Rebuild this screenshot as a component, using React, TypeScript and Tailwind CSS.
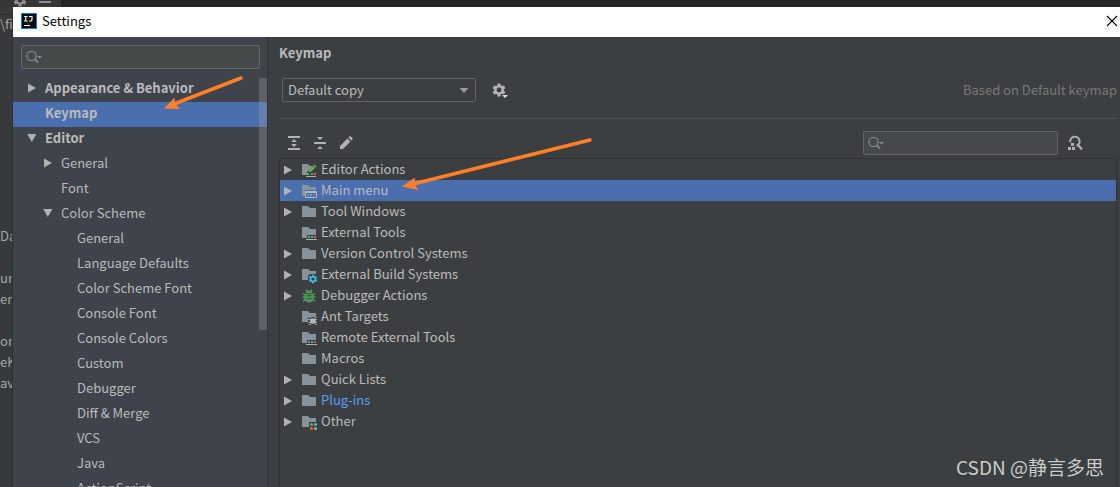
import React from "react";

type IconKind =
  | "folder"
  | "editor"
  | "menu"
  | "tools"
  | "build"
  | "bug"
  | "ant"
  | "other";

type SideItem = {
  label: string;
  level: 0 | 1 | 2;
  open?: boolean;
  bold?: boolean;
  selected?: boolean;
};

type ActionItem = {
  label: string;
  icon: IconKind;
  expandable?: boolean;
  selected?: boolean;
  modified?: boolean;
};

const sideItems: SideItem[] = [
  { label: "Appearance & Behavior", level: 0, open: false, bold: true },
  { label: "Keymap", level: 0, bold: true, selected: true },
  { label: "Editor", level: 0, open: true, bold: true },
  { label: "General", level: 1, open: false },
  { label: "Font", level: 1 },
  { label: "Color Scheme", level: 1, open: true },
  { label: "General", level: 2 },
  { label: "Language Defaults", level: 2 },
  { label: "Color Scheme Font", level: 2 },
  { label: "Console Font", level: 2 },
  { label: "Console Colors", level: 2 },
  { label: "Custom", level: 2 },
  { label: "Debugger", level: 2 },
  { label: "Diff & Merge", level: 2 },
  { label: "VCS", level: 2 },
  { label: "Java", level: 2 },
  { label: "ActionScript", level: 2 },
];

const actionItems: ActionItem[] = [
  { label: "Editor Actions", icon: "editor", expandable: true },
  { label: "Main menu", icon: "menu", expandable: true, selected: true },
  { label: "Tool Windows", icon: "folder", expandable: true },
  { label: "External Tools", icon: "tools" },
  { label: "Version Control Systems", icon: "folder", expandable: true },
  { label: "External Build Systems", icon: "build", expandable: true },
  { label: "Debugger Actions", icon: "bug", expandable: true },
  { label: "Ant Targets", icon: "ant" },
  { label: "Remote External Tools", icon: "tools" },
  { label: "Macros", icon: "folder" },
  { label: "Quick Lists", icon: "folder", expandable: true },
  { label: "Plug-ins", icon: "folder", expandable: true, modified: true },
  { label: "Other", icon: "other", expandable: true },
];

const projectLines = ["Da", "", "urc", "ere", "", "onf", "eK", "ava"];

const indent = { 0: "pl-[13px]", 1: "pl-[29px]", 2: "pl-[45px]" };

function Chevron({ open }: { open?: boolean }) {
  return (
    <svg className="size-3 shrink-0" viewBox="0 0 12 12" fill="#afb1b3" aria-hidden="true">
      {open === false && <path d="M2 1.5 10 6 2 10.5z" />}
      {open === true && <path d="M1.2 2h9.2L5.8 10z" />}
    </svg>
  );
}

function SearchIcon() {
  return (
    <svg className="pointer-events-none absolute top-1 left-[5px] h-4 w-[18px]" viewBox="0 0 18 16" aria-hidden="true">
      <circle cx="5.5" cy="7" r="4.7" fill="none" stroke="#7f8b91" strokeWidth="1.2" />
      <path d="m8.9 10.4 3.2 3.2" stroke="#7f8b91" strokeWidth="1.7" />
      <path d="M11 7h5l-2.5 2.6z" fill="#7f8b91" />
    </svg>
  );
}

function Gear({ x, y, r, fill, hole }: { x: number; y: number; r: number; fill: string; hole: string }) {
  return (
    <g transform={`translate(${x} ${y}) scale(${r / 6.5})`} fill={fill}>
      <circle r="4.9" />
      {[0, 60, 120].map((a) => (
        <rect key={a} x="-1.6" y="-6.5" width="3.2" height="13" transform={`rotate(${a})`} />
      ))}
      <circle r="2.4" fill={hole} />
    </g>
  );
}

function NodeIcon({ kind }: { kind: IconKind }) {
  const grey = "#87939a";
  if (kind === "bug") {
    return (
      <svg className="size-4 shrink-0" viewBox="0 0 16 16" aria-hidden="true">
        <g stroke="#499c54" strokeWidth="1.5" fill="none">
          <path d="M5 1.5 6.5 4M11 1.5 9.5 4M2 5.5l2 1.2M14 5.5l-2 1.2M1.5 9H4M14.5 9H12M2 13l2.5-1.5M14 13l-2.5-1.5" />
        </g>
        <path d="M4.5 5.2C5 3.3 6.3 2.5 8 2.5s3 .8 3.5 2.7z" fill="#499c54" />
        <path d="M3.5 6h9v4.5a4.5 4 0 0 1-9 0z" fill="#499c54" />
        <path d="M5.5 7.8h5M5.5 10.8h5" stroke="#3c3f41" strokeWidth="1.1" />
      </svg>
    );
  }
  const body = {
    folder: "M1 2h6l2 2h6v9H1z",
    editor: "M1 2h6l2 2h3L6 10v3H1z",
    menu: "M1 2h6l2 2h6v3H4v6H1z",
    tools: "M1 2h6l2 2h6v6H6v3H1z",
    build: "M1 2h6l2 2h6v3H9L7 9v4H1z",
    ant: "M1 2h6l2 2h6v4H7v5H1z",
    other: "M1 2h6l2 2h6v4H8v5H1z",
  }[kind];
  return (
    <svg className="size-4 shrink-0 overflow-visible" viewBox="0 0 16 16" aria-hidden="true">
      <path d={body} fill={grey} />
      {kind === "editor" && (
        <>
          <path d="m7.5 10 .7-2.5 5.3-5 2 2L10 9.8z" fill="#62b543" />
          <path d="m12 3.7 2.2 2.2" stroke="#3c3f41" strokeWidth=".8" />
          <path d="M6 11h2v2H6z" fill="#62b543" />
          <path d="M10 11h2v2h-2z" fill="#40a3d0" />
          <path d="M13 11h2v2h-2z" fill="#e05f36" />
          <path d="M5 14h10v1H5z" fill="#afb1b3" />
        </>
      )}
      {kind === "menu" && (
        <>
          <path d="M4.5 8.5h11v6h-11zM4 9.5h12" stroke="#afbac4" fill="#4b6eaf" />
          <path d="M6 11h2v2H6z" fill="#62b543" />
          <path d="M9 11h2v2H9z" fill="#40b6e0" />
          <path d="M12 11h2v2h-2z" fill="#e05f36" />
        </>
      )}
      {kind === "tools" && (
        <>
          <path d="M7 11h2v2H7z" fill="#62b543" />
          <path d="M10 11h2v2h-2z" fill="#40a3d0" />
          <path d="M13 11h2v2h-2z" fill="#e05f36" />
          <path d="M5 14h11v1H5z" fill="#afb1b3" />
        </>
      )}
      {kind === "build" && <Gear x={12} y={12} r={4.3} fill="#40b6e0" hole="#3c3f41" />}
      {kind === "ant" && (
        <g stroke="#afb1b3" fill="#afb1b3">
          <path
            d="M8 8.5h1.5l1.500 2M7 10.500h9M7 13.500h9M8 15.500h1.500l1.500-2M16 8.500h-1.500l-1.500 2M16 15.500h-1.500l-1.500-2"
            fill="none"
            strokeWidth=".8"
          />
          <ellipse cx="12" cy="12" rx="3" ry="2.7" stroke="none" />
        </g>
      )}
      {kind === "other" && (
        <>
          <circle cx="10.5" cy="10.5" r="1.6" fill="#62b543" />
          <circle cx="14.5" cy="10.5" r="1.6" fill="#40b6e0" />
          <circle cx="10.5" cy="14.5" r="1.6" fill="#f26522" />
          <circle cx="14.5" cy="14.5" r="1.6" fill="#9aa7b0" />
        </>
      )}
    </svg>
  );
}

function TitleBar() {
  return (
    <header className="flex h-[30px] shrink-0 items-center gap-[5px] bg-white pr-0.5 pb-0.5 pl-2 text-black">
      <svg className="size-4" viewBox="0 0 16 16" aria-hidden="true">
        <path d="M0 0h16v16H0z" fill="#087cfa" />
        <path d="M1 1h14v14H1z" fill="#0b0b0d" />
        <path
          d="M3 3.500h3.500M4.750 3.500v4.500M3 8h3.500M8 3.500h3v3.200Q11 8 9.600 8H8M3 12.500h6"
          stroke="#fff"
          strokeWidth="1.1"
          fill="none"
        />
      </svg>
      <h1 className="flex-1">Settings</h1>
      <button type="button" aria-label="Close" className="size-3">
        <svg viewBox="0 0 12 12" className="size-3" aria-hidden="true">
          <path d="m1 1 10 10M11 1 1 11" stroke="#000" strokeWidth="1.1" />
        </svg>
      </button>
    </header>
  );
}

function Sidebar() {
  return (
    <nav className="relative w-[255px] shrink-0 overflow-hidden border-r border-[#323232] bg-[#3e434c] pt-2">
      <div className="relative mr-[7px] ml-2">
        <input
          type="text"
          aria-label="Search settings"
          className="block h-6 w-full rounded-xs border border-[#646464] bg-[#45494a] pl-6 outline-none"
        />
        <SearchIcon />
      </div>
      <ul className="mt-2">
        {sideItems.map((item, i) => (
          <li key={i}>
            <button
              type="button"
              className={`flex h-[25px] w-full items-center gap-[7px] pb-[3px] text-left ${indent[item.level]} ${
                item.bold ? "font-bold" : ""
              } ${item.selected ? "bg-[#4b6eaf]" : ""}`}
            >
              <Chevron open={item.open} />
              {item.label}
            </button>
          </li>
        ))}
      </ul>
      <div className="absolute top-[41px] right-0 h-[252px] w-2 bg-[#a6a6a6]/30" />
    </nav>
  );
}

function Toolbar() {
  return (
    <div className="flex h-6 items-center gap-[10px] pr-[33px] pl-[7px]">
      <button type="button" aria-label="Expand all">
        <svg className="size-4" viewBox="0 0 16 16" fill="#afb1b3" aria-hidden="true">
          <path d="M2 1h12v2H2zM2 13h12v2H2zM8 4l3 3H5zM8 12 5 9h6z" />
        </svg>
      </button>
      <button type="button" aria-label="Collapse all">
        <svg className="size-4" viewBox="0 0 16 16" fill="#afb1b3" aria-hidden="true">
          <path d="M2 7h12v2H2zM5 2h6L8 5zM5 14h6l-3-3z" />
        </svg>
      </button>
      <button type="button" aria-label="Edit shortcut">
        <svg className="size-4" viewBox="0 0 16 16" fill="#afb1b3" aria-hidden="true">
          <path d="M2 14v-3l7.500-7.500 3 3L5 14zM10.400 2.600l1-1q.8-.8 1.600 0l1.400 1.400q.8.8 0 1.600l-1 1z" />
        </svg>
      </button>
      <div className="relative ml-auto w-[195px]">
        <input
          type="text"
          aria-label="Search actions"
          className="block h-6 w-full rounded-xs border border-[#646464] bg-[#45494a] pl-6 outline-none"
        />
        <SearchIcon />
      </div>
      <button type="button" aria-label="Find by shortcut">
        <svg className="size-4" viewBox="1 0 16 16" aria-hidden="true">
          <path
            d="M3.300 7.200A4.700 4.700 0 1 1 9.500 10.800M11 10l4 4.500"
            fill="none"
            stroke="#afb1b3"
            strokeWidth="2"
          />
          <path d="M4 8h3v3H4zM1 12h3v3H1zM5 12h3v3H5z" fill="#afb1b3" />
        </svg>
      </button>
    </div>
  );
}

function KeymapPanel() {
  return (
    <main className="flex min-w-0 flex-1 flex-col pr-[3px] pl-[11px]">
      <h2 className="mt-[7px] h-[18px] font-bold">Keymap</h2>
      <div className="mt-4 flex h-6 items-center pl-[3px]">
        <div className="relative">
          <select
            aria-label="Keymap"
            className="block h-6 w-[194px] appearance-none rounded-xs border border-[#646464] bg-[#3c3f41] pl-[5px] outline-none"
          >
            <option>Default copy</option>
          </select>
          <svg className="pointer-events-none absolute top-2 right-1.5 h-2 w-3" viewBox="0 0 12 8" aria-hidden="true">
            <path d="M1.5 2h9L6 7z" fill="#9b9da0" />
          </svg>
        </div>
        <button type="button" aria-label="Keymap options" className="ml-4">
          <svg className="size-4" viewBox="0 0 16 16" aria-hidden="true">
            <Gear x={7} y={8} r={6.5} fill="#afb1b3" hole="#3c3f41" />
            <path d="M9 12h7v4H9z" fill="#3c3f41" />
            <path d="M10 13h6l-3 3z" fill="#dcdcdc" />
          </svg>
        </button>
        <p className="ml-auto whitespace-nowrap text-[#787878]">Based on Default keymap</p>
      </div>
      <hr className="mt-4 mb-3 border-[#515151]" />
      <Toolbar />
      <div className="mt-[3px] min-h-0 flex-1 overflow-hidden border-x border-t border-[#323232]">
        <ul>
          {actionItems.map((item) => (
            <li key={item.label}>
              <button
                type="button"
                className={`flex h-[21px] w-full items-center pl-0.5 text-left ${
                  item.selected ? "bg-[#4b6eaf]" : ""
                } ${item.modified ? "text-[#589df6]" : ""}`}
              >
                <Chevron open={item.expandable ? false : undefined} />
                <span className="mr-1 ml-[7px] flex">
                  <NodeIcon kind={item.icon} />
                </span>
                <span className="pb-0.5">{item.label}</span>
              </button>
            </li>
          ))}
        </ul>
      </div>
    </main>
  );
}

export default function App() {
  return (
    <div className="relative flex h-screen flex-col overflow-hidden bg-[#3c3f41] font-['Noto_Sans_CJK_SC',sans-serif] text-[13px] leading-[18px] text-[#bbbbbb]">
      <div className="flex h-[7px] shrink-0 bg-[#242424]">
        <div className="flex w-[61px] items-end gap-3 overflow-hidden bg-[#343637] pl-[13px]">
          <svg className="h-[7px] w-3.5" viewBox="0 7 14 7" aria-hidden="true">
            <Gear x={7} y={7} r={6.5} fill="#8b8d8f" hole="#343637" />
          </svg>
          <svg className="h-[7px] w-3" viewBox="0 0 12 7" aria-hidden="true">
            <path d="M0 1h12v2H0z" fill="#8b8d8f" />
          </svg>
        </div>
      </div>
      <div className="flex min-h-0 flex-1">
        <aside className="w-[13px] shrink-0 overflow-hidden border-r border-[#303030] bg-[#37393b] whitespace-nowrap text-[#a4a6a8]">
          <p className="mt-[7px] border-t border-[#2b2b2b]">\fi</p>
          <div className="mt-[194px]">
            {projectLines.map((line, i) => (
              <p key={i} className="h-[21px]">
                {line}
              </p>
            ))}
          </div>
        </aside>
        <section className="flex min-w-0 flex-1 flex-col">
          <TitleBar />
          <div className="flex min-h-0 flex-1">
            <Sidebar />
            <KeymapPanel />
          </div>
        </section>
      </div>
      <svg className="pointer-events-none absolute top-[70px] left-40 h-11 w-[90px]" viewBox="0 0 90 44" aria-hidden="true">
        <path d="M81 8 14 34" stroke="#ff7f27" strokeWidth="3.5" strokeLinecap="round" />
        <path d="M4 38.500 14.500 27.500 15 33.500 20 39z" fill="#ff7f27" />
      </svg>
      <svg className="pointer-events-none absolute top-[130px] left-[395px] h-[70px] w-[205px]" viewBox="0 0 205 70" aria-hidden="true">
        <path d="M195 10 18 54" stroke="#ff7f27" strokeWidth="3.5" strokeLinecap="round" />
        <path d="M7 56.500 20 47.500 19.500 53.500 23 60z" fill="#ff7f27" />
      </svg>
      <p className="absolute right-4 bottom-2 text-[19px] leading-6 text-[#cccccc] text-shadow-2xs">
        CSDN @静言多思
      </p>
    </div>
  );
}
